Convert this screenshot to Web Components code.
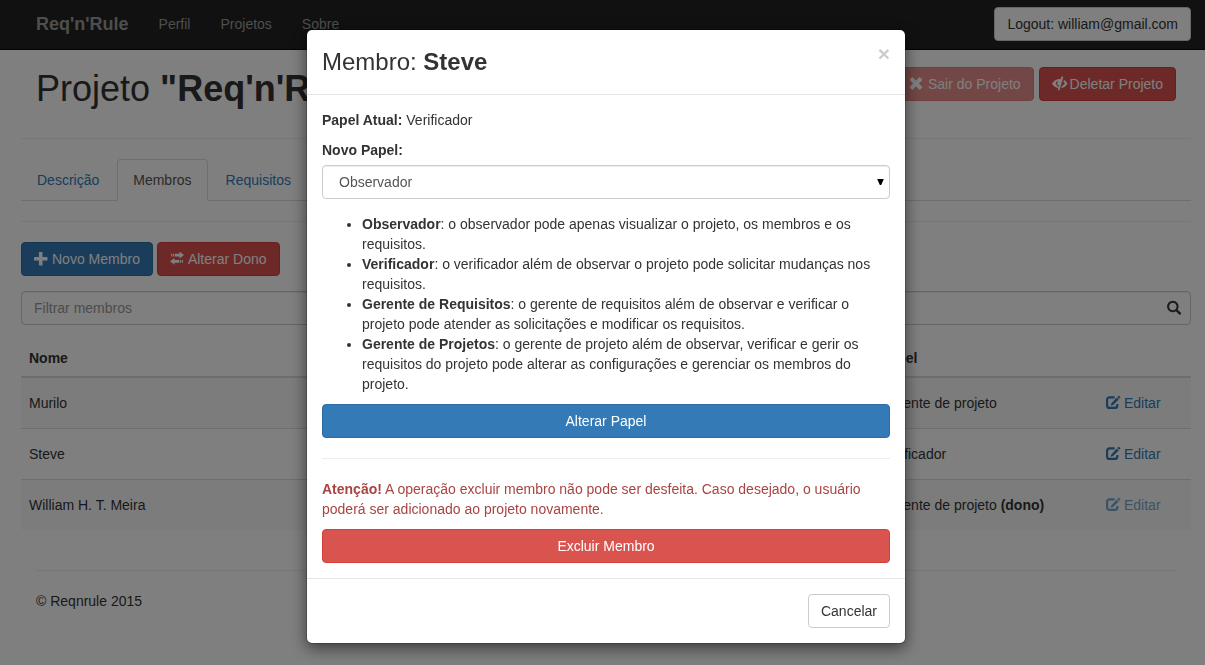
<!DOCTYPE html>
<html lang="pt-BR">
<head>
<meta charset="utf-8">
<meta name="viewport" content="width=device-width, initial-scale=1">
<title>Req'n'Rule</title>
<style>
  body {
    margin: 0;
    background: #fff;
    color: #333;
    font: 14px/20px "Liberation Sans", Arial, sans-serif;
  }
</style>
</head>
<body>
<rr-app></rr-app>

<script>
const define = (name, html) => {
  const template = document.createElement('template');
  template.innerHTML = '<style>*{box-sizing:border-box}</style>' + html;
  customElements.define(name, class extends HTMLElement {
    constructor() {
      super();
      this.attachShadow({ mode: 'open' }).append(template.content.cloneNode(true));
    }
  });
};

/* Icons: 14px glyphs on a 14-unit grid */
const ICONS = {
  plus: '<path d="M5.500 0h2.400q.6 0 .6.600V5h4.400q.6 0 .6.600v2.400q0 .6-.6.600H8.500v4.400q0 .6-.6.600H5.500q-.6 0-.6-.6V8.600H.6Q0 8.600 0 8V5.600Q0 5 .6 5h4.300V.6q0-.6.600-.6z"/>',
  remove: '<path transform="rotate(45 6 6.500)" d="M4.500-.7h3q.5 0 .5.500v4.700h4.700q.5 0 .5.500v3q0 .5-.5.500H8v4.700q0 .5-.5.500h-3q-.5 0-.5-.5V8.500H-.7q-.5 0-.5-.5V5q0-.5.5-.5H4V-.2q0-.5.500-.5z"/>',
  transfer: '<path d="M9.500-.5 14 3 9.500 6.500V4.500H5V1.800h4.500zM3 1.800h1.300v2.700H3zM1 1.800h1.200v2.700H1zM4.500 6v2H9v2.700H4.500v2L0 9.300zM9.700 8H11v2.700H9.700zM11.800 8H13v2.700h-1.200z"/>',
  eye: '<path fill-rule="evenodd" d="M9.500-.7 11.300-.2 10.600 2.500 7.400 13.500 5.800 13 6.300 11.100C3.300 10.700 1.300 8.900 0 6.700 1.700 3.700 5 1.700 8.700 2zM4.800 4.300A3.200 3.200 0 0 0 4.200 8L5.300 7.400A2.200 2.200 0 0 1 6 4.900zM6.700 9.800 7.200 8.200 4.600 8Q5.200 9.500 6.700 9.800z"/><path d="M12 2.800Q14.300 4.300 15.600 6.700 13.700 10 9.300 11.200L9.900 9Q12.200 7.900 12.800 6.500 12.300 5.500 11.300 4.800z"/>',
  edit: '<path fill="none" stroke="currentColor" stroke-width="2.200" d="M8.600 1.400H3.600Q1.100 1.400 1.100 3.900V9.400Q1.100 11.900 3.600 11.900H8.800Q11.300 11.900 11.300 9.400V8"/><path d="M5.300 7.500 10.800 1.600 12.700 3.500 7.100 9.100 4.600 9.800zM11.400.9l1-1q.4-.4.8 0l1 1q.4.400 0 .8l-1 1z"/>',
  search: '<path transform="translate(0 13.700) scale(.01167 -.01167)" d="M500 1191q100 0 191-39t156.500-104.500t104.500-156.500t39-191l-1-2l1-5q0-141-78-262l275-274q23-26 22.500-44.500t-22.500-42.500l-59-58q-26-20-46.500-20t-39.500 20l-275 274q-119-77-261-77l-5 1l-2-1q-100 0-191 39t-156.500 104.500t-104.500 156.500t-39 191t39 191t104.500 156.500t156.500 104.500t191 39zM500 1022q-88 0-162-43t-117-117t-43-162t43-162t117-117t162-43t162 43t117 117t43 162t-43 162t-117 117t-162 43z"/>'
};
customElements.define('rr-icon', class extends HTMLElement {
  constructor() {
    super();
    this.attachShadow({ mode: 'open' });
  }
  connectedCallback() {
    this.shadowRoot.innerHTML = `<style>
      :host { display: inline-block; width: 14px; height: 14px; flex: none; }
      svg { display: block; overflow: visible; fill: currentColor; }
    </style><svg width="14" height="14" viewBox="0 0 14 14" aria-hidden="true">${ICONS[this.getAttribute('name')]}</svg>`;
  }
});

define('rr-button', `<style>
  :host { display: inline-block; --bg: #fff; --line: #ccc; --ink: #333; }
  :host([kind=primary]) { --bg: #337ab7; --line: #2e6da4; --ink: #fff; }
  :host([kind=danger]) { --bg: #d9534f; --line: #d43f3a; --ink: #fff; }
  :host([kind=link]) { --bg: transparent; --line: transparent; --ink: #337ab7; }
  :host([block]) { display: block; }
  :host([dim]) { opacity: .65; }
  button {
    display: flex; align-items: center; justify-content: center; gap: 4px;
    width: 100%; padding: 6px 12px;
    font: inherit; line-height: 20px; white-space: nowrap;
    color: var(--ink); background: var(--bg);
    border: 1px solid var(--line); border-radius: 4px; cursor: pointer;
  }
</style><button type="button"><slot name="icon"></slot><span><slot></slot></span></button>`);

define('rr-navbar', `<style>
  :host { display: block; background: #222; border-bottom: 1px solid #080808; padding-left: 7px; }
  nav { display: flex; align-items: center; max-width: 1170px; margin: 0 auto; padding: 7px 0 8px; }
  a { color: #9d9d9d; text-decoration: none; padding: 0 15px; }
  .brand { font-size: 18px; font-weight: bold; }
  rr-button { margin-left: auto; }
</style>
<nav>
  <a class="brand" href="#">Req'n'Rule</a>
  <a href="#perfil">Perfil</a>
  <a href="#projetos">Projetos</a>
  <a href="#sobre">Sobre</a>
  <rr-button>Logout: william@gmail.com</rr-button>
</nav>`);

define('rr-project-header', `<style>
  :host { display: flex; justify-content: space-between; padding: 17px 15px 27px; border-bottom: 1px solid #eee; }
  h1 { margin: 0; font-size: 36px; line-height: 44px; font-weight: normal; }
  .actions { display: flex; align-items: flex-start; gap: 5px; }
</style>
<h1>Projeto <b>"Req'n'Rule"</b></h1>
<div class="actions">
  <rr-button kind="danger" dim><rr-icon slot="icon" name="remove"></rr-icon>Sair do Projeto</rr-button>
  <rr-button kind="danger"><rr-icon slot="icon" name="eye"></rr-icon>Deletar Projeto</rr-button>
</div>`);

define('rr-tabs', `<style>
  :host { display: flex; gap: 2px; border-bottom: 1px solid #ddd; }
  a {
    padding: 10px 15px; margin-bottom: -1px; color: #337ab7; text-decoration: none;
    border: 1px solid transparent; border-radius: 4px 4px 0 0;
  }
  a[aria-current] { color: #555; background: #fff; border-color: #ddd #ddd #fff; }
</style>
<a href="#descricao">Descrição</a>
<a href="#membros" aria-current="page">Membros</a>
<a href="#requisitos">Requisitos</a>`);

define('rr-filter', `<style>
  :host { display: flex; align-items: center; border: 1px solid #ccc; border-radius: 4px; padding-right: 9px;
    background: #fff; box-shadow: inset 0 1px 1px rgba(0,0,0,.075); }
  input { flex: 1; min-width: 0; height: 32px; padding: 0 12px; border: 0; outline: 0; background: none; font: inherit; color: #555; }
  input::placeholder { color: #999; opacity: 1; }
</style>
<input type="text" placeholder="Filtrar membros" aria-label="Filtrar membros">
<rr-icon name="search"></rr-icon>`);

define('rr-members', `<style>
  :host { display: block; }
  table { width: 100%; table-layout: fixed; border-collapse: separate; border-spacing: 0; }
  .role { width: 213px; }
  .act { width: 106px; }
  th, td { padding: 8px; text-align: left; }
  th { border-bottom: 2px solid #ddd; }
  tbody tr + tr td { border-top: 1px solid #ddd; }
  tbody tr:nth-child(odd) { background: #f9f9f9; }
  td rr-button { vertical-align: top; }
</style>
<table>
  <colgroup><col><col class="role"><col class="act"></colgroup>
  <thead><tr><th>Nome</th><th>Papel</th><th></th></tr></thead>
  <tbody>
    <tr><td>Murilo</td><td>Gerente de projeto</td>
      <td><rr-button kind="link"><rr-icon slot="icon" name="edit"></rr-icon>Editar</rr-button></td></tr>
    <tr><td>Steve</td><td>Verificador</td>
      <td><rr-button kind="link"><rr-icon slot="icon" name="edit"></rr-icon>Editar</rr-button></td></tr>
    <tr><td>William H. T. Meira</td><td>Gerente de projeto <b>(dono)</b></td>
      <td><rr-button kind="link" dim><rr-icon slot="icon" name="edit"></rr-icon>Editar</rr-button></td></tr>
  </tbody>
</table>`);

define('rr-role-select', `<style>
  :host { display: block; }
  label { display: block; font-weight: bold; margin-bottom: 5px; }
  .box { position: relative; }
  select {
    display: block; width: 100%; height: 34px; padding: 6px 28px 6px 16px; appearance: none;
    font: inherit; color: #555; background: #fff; border: 1px solid #ccc; border-radius: 4px;
    box-shadow: inset 0 1px 1px rgba(0,0,0,.075);
  }
  svg { position: absolute; right: 6px; top: 14px; pointer-events: none; }
</style>
<label for="role">Novo Papel:</label>
<div class="box">
  <select id="role">
    <option>Observador</option><option>Verificador</option>
    <option>Gerente de Requisitos</option><option>Gerente de Projetos</option>
  </select>
  <svg width="7" height="7" viewBox="0 0 7 7" aria-hidden="true"><path d="M.2 0h6.600L4.200 6H2.800z"/></svg>
</div>`);

define('rr-modal', `<style>
  :host { display: block; position: fixed; inset: 0; overflow: auto; background: rgba(0,0,0,.5); padding: 29px 0 0 7px; }
  section {
    max-width: 600px; margin: 0 auto 20px; background: #fff; background-clip: padding-box;
    border: 1px solid rgba(0,0,0,.2); border-radius: 6px; box-shadow: 0 5px 15px rgba(0,0,0,.5);
  }
  header { display: flex; justify-content: space-between; align-items: flex-start; padding: 15px; border-bottom: 1px solid #e5e5e5; }
  h2 { margin: 0; font-size: 24px; line-height: 34px; font-weight: normal; }
  .close { padding: 0; border: 0; background: none; color: #ccc; font: bold 21px/18px "Liberation Sans", Arial, sans-serif; }
  .body { padding: 15px; }
  footer { display: flex; justify-content: flex-end; padding: 15px; border-top: 1px solid #e5e5e5; }
</style>
<section role="dialog" aria-modal="true">
  <header><h2><slot name="title"></slot></h2><button class="close" type="button" aria-label="Fechar">×</button></header>
  <div class="body"><slot></slot></div>
  <footer><slot name="footer"></slot></footer>
</section>`);

define('rr-member-form', `<style>
  :host { display: block; }
  p { margin: 0 0 10px; }
  ul { margin: 15px 0 10px; padding-left: 40px; }
  hr { margin: 20px 0; border: 0; border-top: 1px solid #eee; }
  .warn { color: #a94442; }
</style>
<p><b>Papel Atual:</b> Verificador</p>
<rr-role-select></rr-role-select>
<ul>
  <li><b>Observador</b>: o observador pode apenas visualizar o projeto, os membros e os requisitos.</li>
  <li><b>Verificador</b>: o verificador além de observar o projeto pode solicitar mudanças nos requisitos.</li>
  <li><b>Gerente de Requisitos</b>: o gerente de requisitos além de observar e verificar o projeto pode atender as solicitações e modificar os requisitos.</li>
  <li><b>Gerente de Projetos</b>: o gerente de projeto além de observar, verificar e gerir os requisitos do projeto pode alterar as configurações e gerenciar os membros do projeto.</li>
</ul>
<rr-button kind="primary" block>Alterar Papel</rr-button>
<hr>
<p class="warn"><b>Atenção!</b> A operação excluir membro não pode ser desfeita. Caso desejado, o usuário poderá ser adicionado ao projeto novamente.</p>
<rr-button kind="danger" block>Excluir Membro</rr-button>`);

define('rr-app', `<style>
  :host { display: block; }
  .page { padding-left: 7px; }
  main, .foot { max-width: 1170px; margin: 0 auto; }
  rr-tabs { margin-top: 20px; }
  hr { margin: 20px 0; border: 0; border-top: 1px solid #eee; }
  .actions { display: flex; gap: 4px; margin-bottom: 15px; }
  rr-members { margin-top: 15px; }
  .foot { padding: 20px 15px; }
  .foot p { margin: 0; }
</style>
<rr-navbar></rr-navbar>
<div class="page">
  <main>
    <rr-project-header></rr-project-header>
    <rr-tabs></rr-tabs>
    <hr>
    <div class="actions">
      <rr-button kind="primary"><rr-icon slot="icon" name="plus"></rr-icon>Novo Membro</rr-button>
      <rr-button kind="danger"><rr-icon slot="icon" name="transfer"></rr-icon>Alterar Dono</rr-button>
    </div>
    <rr-filter></rr-filter>
    <rr-members></rr-members>
  </main>
  <footer class="foot"><hr><p>© Reqnrule 2015</p></footer>
</div>
<rr-modal>
  <span slot="title">Membro: <b>Steve</b></span>
  <rr-member-form></rr-member-form>
  <rr-button slot="footer">Cancelar</rr-button>
</rr-modal>`);
</script>
</body>
</html>
